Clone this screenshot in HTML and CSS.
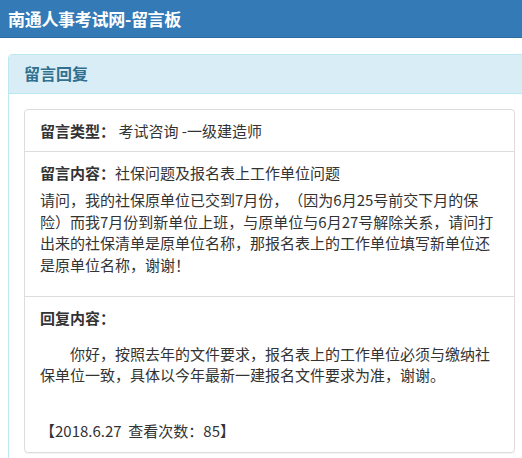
FILE: index.html
```html
<!DOCTYPE html>
<html lang="zh-CN">
<head>
<meta charset="utf-8">
<title>南通人事考试网-留言板</title>
<link rel="stylesheet" href="styles.css">
</head>
<body>
<header class="topbar">
  <h1 class="site-title">南通人事考试网-留言板</h1>
</header>
<section class="panel">
  <div class="panel-heading">
    <h2 class="panel-title">留言回复</h2>
  </div>
  <div class="panel-body">
    <ul class="msg-list">
      <li class="msg-item"><b class="label">留言类型：</b> 考试咨询 -一级建造师</li>
      <li class="msg-item">
        <div class="msg-title"><b class="label">留言内容：</b>社保问题及报名表上工作单位问题</div>
        <p class="msg-text">请问，我的社保原单位已交到7月份，（因为6月25号前交下月的保险）而我7月份到新单位上班，与原单位与6月27号解除关系，请问打出来的社保清单是原单位名称，那报名表上的工作单位填写新单位还是原单位名称，谢谢！</p>
      </li>
      <li class="msg-item">
        <div class="msg-title"><b class="label">回复内容：</b></div>
        <p class="reply-text">你好，按照去年的文件要求，报名表上的工作单位必须与缴纳社保单位一致，具体以今年最新一建报名文件要求为准，谢谢。</p>
        <p class="reply-date">【2018.6.27&nbsp;&nbsp;查看次数：85】</p>
      </li>
    </ul>
  </div>
</section>
</body>
</html>
```
FILE: styles.css
```css
html, body {
  margin: 0;
  padding: 0;
  overflow: hidden;
  background: #fff;
}
body {
  font-family: "Noto Sans CJK SC", "Noto Sans", sans-serif;
  font-size: 15px;
  line-height: 1.42857;
  color: #333;
  text-spacing-trim: space-all;
}
.topbar {
  height: 37px;
  background: #337ab7;
  border-bottom: 1px solid #2e6da4;
  display: flex;
  align-items: center;
  padding-left: 8px;
}
.site-title {
  margin: 0;
  color: #fff;
  font-size: 17px;
  font-weight: bold;
  line-height: 1;
  letter-spacing: -0.3px;
}
.panel {
  margin: 16px 0 0 8px;
  width: 521px;
  border: 1px solid #bce8f1;
  border-radius: 4px;
  background: #fff;
}
.panel-heading {
  background: #d9edf7;
  border-bottom: 1px solid #bce8f1;
  padding: 10px 15px;
  border-radius: 3px 3px 0 0;
}
.panel-title {
  margin: 0;
  font-size: 16px;
  line-height: 1.1;
  font-weight: bold;
  color: #31708f;
}
.panel-body {
  padding: 15px;
}
.msg-list {
  list-style: none;
  margin: 0;
  padding: 0;
  border: 1px solid #ddd;
  border-radius: 4px;
  box-shadow: 0 1px 1px rgba(0,0,0,.05);
}
.msg-item {
  padding: 10px 15px;
  border-top: 1px solid #ddd;
}
.msg-item:first-child {
  border-top: 0;
}
.label {
  font-weight: bold;
}
.msg-text {
  margin: 6px 0 11px;
}
.reply-text {
  margin: 14px 0 0;
  text-indent: 2em;
}
.reply-date {
  margin: 35px 0 0;
}
```
